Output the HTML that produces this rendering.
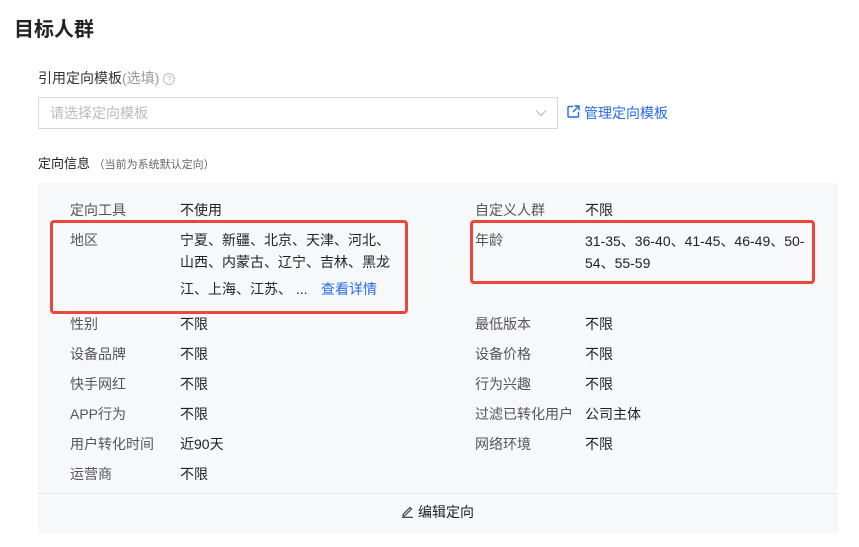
<!DOCTYPE html>
<html><head><meta charset="utf-8"><style>
*{margin:0;padding:0;box-sizing:border-box}
body{width:859px;height:547px;background:#fff;font-family:"Liberation Sans","Noto Sans CJK SC",sans-serif;color:#333;position:relative;overflow:hidden}
.a{position:absolute;white-space:nowrap;font-size:14px;line-height:20px}
.l{color:#555}
.v{color:#222}
.box{position:absolute;border:3px solid #e8473e;border-radius:4px}
</style></head><body>
<div class="a" style="left:14px;top:16px;font-size:20px;line-height:28px;font-weight:bold;color:#222">目标人群</div>
<div class="a" style="left:38px;top:68px;color:#333">引用定向模板<span style="color:#999">(选填)</span> <span style="display:inline-block;width:12px;height:12px;border:1px solid #bbb;border-radius:50%;font-size:9px;line-height:10px;text-align:center;color:#bbb;vertical-align:1px">?</span></div>
<div style="position:absolute;left:38px;top:97px;width:520px;height:32px;border:1px solid #d9d9d9;background:#fff"></div>
<div class="a" style="left:50px;top:103px;color:#bbb">请选择定向模板</div>
<svg style="position:absolute;left:535px;top:109px" width="12" height="8" viewBox="0 0 12 8"><path d="M1 1.5L6 6.5L11 1.5" fill="none" stroke="#bbb" stroke-width="1.2"/></svg>
<svg style="position:absolute;left:567px;top:105px" width="13" height="13" viewBox="0 0 13 13"><path d="M6 1.5H2Q1 1.5 1 2.5V11Q1 12 2 12H10.5Q11.5 12 11.5 11V7M7.5 1H12V5.5M12 1L6 7" fill="none" stroke="#2a6ae8" stroke-width="1.4"/></svg>
<div class="a" style="left:584px;top:103px;color:#2a6ae8">管理定向模板</div>
<div class="a" style="left:38px;top:154px;color:#222;font-size:13px">定向信息 <span style="color:#666;font-size:11px">（当前为系统默认定向）</span></div>
<div style="position:absolute;left:38px;top:183px;width:800px;height:350px;background:#f7f8fa"></div>
<div style="position:absolute;left:38px;top:493px;width:800px;height:1px;background:#e6e7ea"></div>

<div class="a l" style="left:70px;top:200px">定向工具</div><div class="a v" style="left:180px;top:200px">不使用</div>
<div class="a l" style="left:475px;top:200px">自定义人群</div><div class="a v" style="left:585px;top:200px">不限</div>

<div class="a l" style="left:70px;top:230px">地区</div>
<div class="a v" style="left:180px;top:230px">宁夏、新疆、北京、天津、河北、</div>
<div class="a v" style="left:180px;top:252px">山西、内蒙古、辽宁、吉林、黑龙</div>
<div class="a v" style="left:180px;top:279px">江、上海、江苏、 ...</div>
<div class="a" style="left:321px;top:279px;color:#2a6ae8">查看详情</div>
<div class="a l" style="left:475px;top:230px">年龄</div>
<div class="a v" style="left:585px;top:230px;line-height:22px">31-35、36-40、41-45、46-49、50-<br>54、55-59</div>

<div class="a l" style="left:70px;top:314px">性别</div><div class="a v" style="left:180px;top:314px">不限</div>
<div class="a l" style="left:475px;top:314px">最低版本</div><div class="a v" style="left:585px;top:314px">不限</div>
<div class="a l" style="left:70px;top:344px">设备品牌</div><div class="a v" style="left:180px;top:344px">不限</div>
<div class="a l" style="left:475px;top:344px">设备价格</div><div class="a v" style="left:585px;top:344px">不限</div>
<div class="a l" style="left:70px;top:374px">快手网红</div><div class="a v" style="left:180px;top:374px">不限</div>
<div class="a l" style="left:475px;top:374px">行为兴趣</div><div class="a v" style="left:585px;top:374px">不限</div>
<div class="a l" style="left:70px;top:404px">APP行为</div><div class="a v" style="left:180px;top:404px">不限</div>
<div class="a l" style="left:475px;top:404px">过滤已转化用户</div><div class="a v" style="left:585px;top:404px">公司主体</div>
<div class="a l" style="left:70px;top:434px">用户转化时间</div><div class="a v" style="left:180px;top:434px">近90天</div>
<div class="a l" style="left:475px;top:434px">网络环境</div><div class="a v" style="left:585px;top:434px">不限</div>
<div class="a l" style="left:70px;top:464px">运营商</div><div class="a v" style="left:180px;top:464px">不限</div>

<svg style="position:absolute;left:401px;top:505px" width="13" height="13" viewBox="0 0 13 13"><path d="M2 9.5L9 2.5L10.5 4L3.5 11H2Z M1 12.3H12" fill="none" stroke="#333" stroke-width="1.1"/></svg>
<div class="a v" style="left:418px;top:502px">编辑定向</div>

<div class="box" style="left:50px;top:220px;width:358px;height:94px"></div>
<div class="box" style="left:470px;top:220px;width:345px;height:64px"></div>
</body></html>
